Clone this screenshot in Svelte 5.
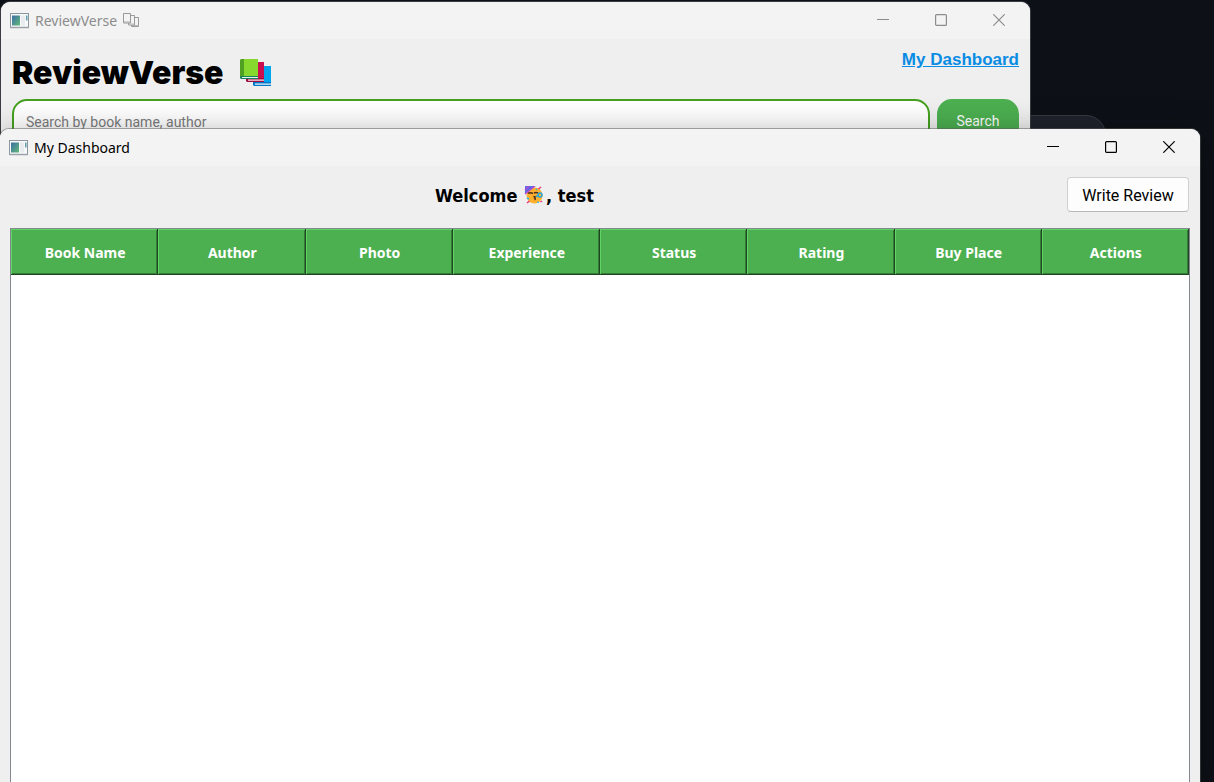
<script>
  const columns = ['Book Name', 'Author', 'Photo', 'Experience', 'Status', 'Rating', 'Buy Place', 'Actions'];
  let query = $state('');
</script>

{#snippet appIcon()}
  <svg class="app-icon" width="20" height="16" viewBox="0 0 20 16" aria-hidden="true">
    <defs>
      <linearGradient id="pane" x1="0" y1="0" x2="1" y2="1">
        <stop offset="0" stop-color="#3c6ea5" />
        <stop offset="1" stop-color="#62b878" />
      </linearGradient>
    </defs>
    <rect x="0.5" y="0.5" width="18" height="14" fill="#f8f9fa" stroke="#8d969f" />
    <path d="M0 14.5h19" stroke="#9ba2aa" stroke-width="1.5" />
    <rect x="2" y="2.500" width="8" height="10" fill="url(#pane)" />
    <rect x="11" y="2.500" width="4" height="10" fill="#e9ebee" />
    <rect x="16" y="2.500" width="1.500" height="5" fill="#5f9fae" />
  </svg>
{/snippet}

{#snippet controls()}
  <div class="controls">
    <button aria-label="Minimize"><svg width="12" height="12" viewBox="0 0 12 12"><path d="M0 5.500h12" /></svg></button>
    <button aria-label="Maximize"><svg width="12" height="12" viewBox="0 0 12 12"><rect x="0.600" y="0.600" width="10.800" height="10.800" rx="1" /></svg></button>
    <button aria-label="Close"><svg width="12" height="12" viewBox="0 0 12 12"><path d="M0.300 0.300l11.400 11.400M11.700 0.300l-11.400 11.400" /></svg></button>
  </div>
{/snippet}

<main class="desktop">
  <div class="pill"></div>

  <section class="window home">
    <header class="titlebar">
      {@render appIcon()}
      <span>ReviewVerse</span>
      <svg class="stack" width="17" height="15" viewBox="0 0 17 15" aria-hidden="true">
        <g fill="#f3f3f3" stroke="#999">
          <path d="M8.5 4.500h7v9h-7z" /><path d="M8.500 12.500h7" stroke="#bbb" />
          <path d="M5.500 2.500h6v9.500h-6z" /><path d="M5.500 11h6" stroke="#bbb" />
          <path d="M0.500 0.500h7v9.500h-7z" /><path d="M0.500 9h7" stroke="#aaa" />
        </g>
      </svg>
      {@render controls()}
    </header>
    <div class="home-body">
      <div class="brand">
        <h1>ReviewVerse</h1>
        <svg width="32" height="28" viewBox="0 0 32 28" aria-hidden="true">
          <path d="M15 7h16v17H13z" fill="#00a4ef" />
          <path d="M13 23h18v4H14l-1-1z" fill="#0078c8" />
          <path d="M15 24.500h16v1.200H15z" fill="#e8f3fa" />
          <path d="M8 3h16v17H6z" fill="#c90f4f" />
          <path d="M6 19h18v4H7l-1-1z" fill="#a10a3d" />
          <path d="M8 20.500h16v1.200H8z" fill="#f6e4ea" />
          <path d="M1 0h17v18H1z" fill="#86d82f" />
          <path d="M0 1l1-1h3v17l-4 2z" fill="#4f9f22" />
          <path d="M0 18l1-1h17v3H1l-1-1z" fill="#16805c" />
          <path d="M2 18h16v1H2z" fill="#e5f5e9" />
        </svg>
      </div>
      <a href="#dashboard">My Dashboard</a>
      <form class="search" onsubmit={(e) => e.preventDefault()}>
        <input type="text" aria-label="Search books" placeholder="Search by book name, author" bind:value={query} />
        <button type="submit">Search</button>
      </form>
    </div>
  </section>

  <section class="window dashboard" id="dashboard">
    <header class="titlebar">
      {@render appIcon()}
      <span>My Dashboard</span>
      {@render controls()}
    </header>
    <div class="toolbar">
      <h2>
        Welcome
        <svg width="20" height="18" viewBox="0 0 20 18" aria-hidden="true">
          <circle cx="10.500" cy="9.500" r="8" fill="#ffb02e" />
          <path d="M1 8V0h10z" fill="#5b6be8" />
          <path d="M1 4l4-4M1 8l10-8" stroke="#b04bd0" stroke-width="1.500" />
          <path d="M4 7.500q2-1.500 5 0M10 7q2-1 4 0" fill="none" stroke="#4a2b20" stroke-width="1.500" />
          <path d="M9.500 10.500q3 0 1 1.500q2 1 0 2" fill="none" stroke="#4a2b20" stroke-width="1.300" />
          <path d="M12 10.500l3-1" stroke="#22a7df" stroke-width="1.800" />
          <circle cx="16" cy="9" r="2" fill="#ffb02e" stroke="#22a7df" stroke-width="1.500" />
          <path d="M14.500 3l2.500-2M3 17l2.500-2M16.500 16l1.500-1" stroke="#f02f78" stroke-width="1.500" />
          <path d="M3 12l2 1M14 15.500v1.500M12 3l1 1" stroke="#28b4e8" stroke-width="1.500" />
        </svg>, test
      </h2>
      <button class="write">Write Review</button>
    </div>
    <div class="grid">
      <table>
        <thead>
          <tr>
            {#each columns as column}
              <th scope="col">{column}</th>
            {/each}
          </tr>
        </thead>
      </table>
    </div>
  </section>
</main>

<style>
  :global(body) {
    background: #0d1117;
  }

  .desktop {
    position: relative;
    height: 100vh;
    overflow: hidden;
    background: #0d1117;
    font-family: "Noto Sans", "Open Sans", sans-serif;
    font-size: 14px;
  }

  button,
  input {
    font-family: Roboto, "Noto Sans", sans-serif;
    box-sizing: border-box;
  }

  .pill {
    position: absolute;
    top: 115px;
    right: 108px;
    width: 200px;
    height: 48px;
    border: 1px solid #363a44;
    border-radius: 20px;
    background: #1f222c;
  }

  .window {
    position: absolute;
    box-sizing: border-box;
    display: flex;
    flex-direction: column;
    overflow: hidden;
    background: #efefef;
  }

  .home {
    top: 2px;
    left: 1px;
    right: 184px;
    height: 400px;
    border-radius: 9px;
    box-shadow: 0 0 0 1px #3a3c41;
    color: #8c8c8c;
  }

  .dashboard {
    top: 129px;
    bottom: 0;
    left: 0;
    right: 14px;
    border-radius: 9px 9px 0 0;
    box-shadow: 0 0 0 1px rgba(90, 90, 90, 0.5), 0 8px 36px rgba(0, 0, 0, 0.4);
    color: #000;
  }

  .titlebar {
    display: flex;
    align-items: center;
    flex: none;
    height: 37px;
    padding-left: 9px;
    background: #f3f3f3;
    line-height: 20px;
  }

  .app-icon {
    margin-right: 5px;
  }

  .stack {
    margin-left: 6px;
  }

  .controls {
    display: flex;
    align-self: flex-start;
    gap: 12px;
    margin-left: auto;
    padding-right: 8px;
  }

  .controls button {
    display: grid;
    place-items: center;
    width: 46px;
    height: 36px;
    padding: 0;
    border: 0;
    background: none;
    color: inherit;
  }

  .controls svg {
    fill: none;
    stroke: currentColor;
    stroke-width: 1.2;
  }

  .home-body {
    display: grid;
    grid-template-columns: 1fr auto;
    padding: 11px;
  }

  .brand {
    display: flex;
    align-items: center;
    gap: 16px;
    height: 46px;
    margin-bottom: 3px;
    color: #000;
  }

  h1 {
    margin: 0;
    font-family: Inter, sans-serif;
    font-size: 32px;
    font-weight: 900;
    line-height: 40px;
  }

  .home-body a {
    color: #0a8ce4;
    font-family: "Liberation Sans", Arial, sans-serif;
    font-size: 17px;
    font-weight: 700;
    line-height: 20px;
  }

  .search {
    grid-column: 1 / -1;
    display: flex;
    gap: 7px;
  }

  .search input {
    flex: 1;
    min-width: 0;
    height: 46px;
    padding: 0 12px;
    border: 2px solid #45a01f;
    border-radius: 15px;
    background: #fff;
    font-size: 14px;
  }

  .search input::placeholder {
    color: #7c7c7c;
  }

  .search button {
    width: 82px;
    height: 44px;
    padding: 0;
    border: 0;
    border-radius: 15px;
    background: #4caf50;
    color: #fff;
    font-size: 14px;
  }

  .toolbar {
    display: grid;
    grid-template-columns: 1fr auto;
    align-items: center;
    gap: 38px;
    padding: 11px 11px 16px 0;
  }

  h2 {
    margin: 0;
    padding-top: 2px;
    text-align: center;
    font-family: "DejaVu Sans Condensed", "Noto Sans", sans-serif;
    font-size: 18px;
    font-weight: 700;
    line-height: 24px;
  }

  h2 svg {
    margin: 0 2px 0 1px;
    vertical-align: -2px;
  }

  .write {
    width: 122px;
    height: 35px;
    padding: 1px 0 0;
    border: 1px solid #d0d0d0;
    border-bottom-color: #b8b8b8;
    border-radius: 4px;
    background: #fdfdfd;
    color: #000;
    font-size: 16px;
  }

  .grid {
    flex: 1;
    margin: 0 10px;
    border: 1px solid #828790;
    border-bottom: 0;
    background: #fff;
  }

  table {
    width: 100%;
    table-layout: fixed;
    border-collapse: separate;
    border-spacing: 0;
  }

  th {
    height: 46px;
    box-sizing: border-box;
    padding: 2px 0 0 2px;
    border-right: 1px solid #1f4620;
    border-bottom: 1px solid #1f4620;
    background: #4caf50;
    box-shadow: inset 1px 1px #5fd564, inset -1px -1px #367c39;
    color: #fff;
    font-size: 14px;
    font-weight: 700;
  }
</style>
